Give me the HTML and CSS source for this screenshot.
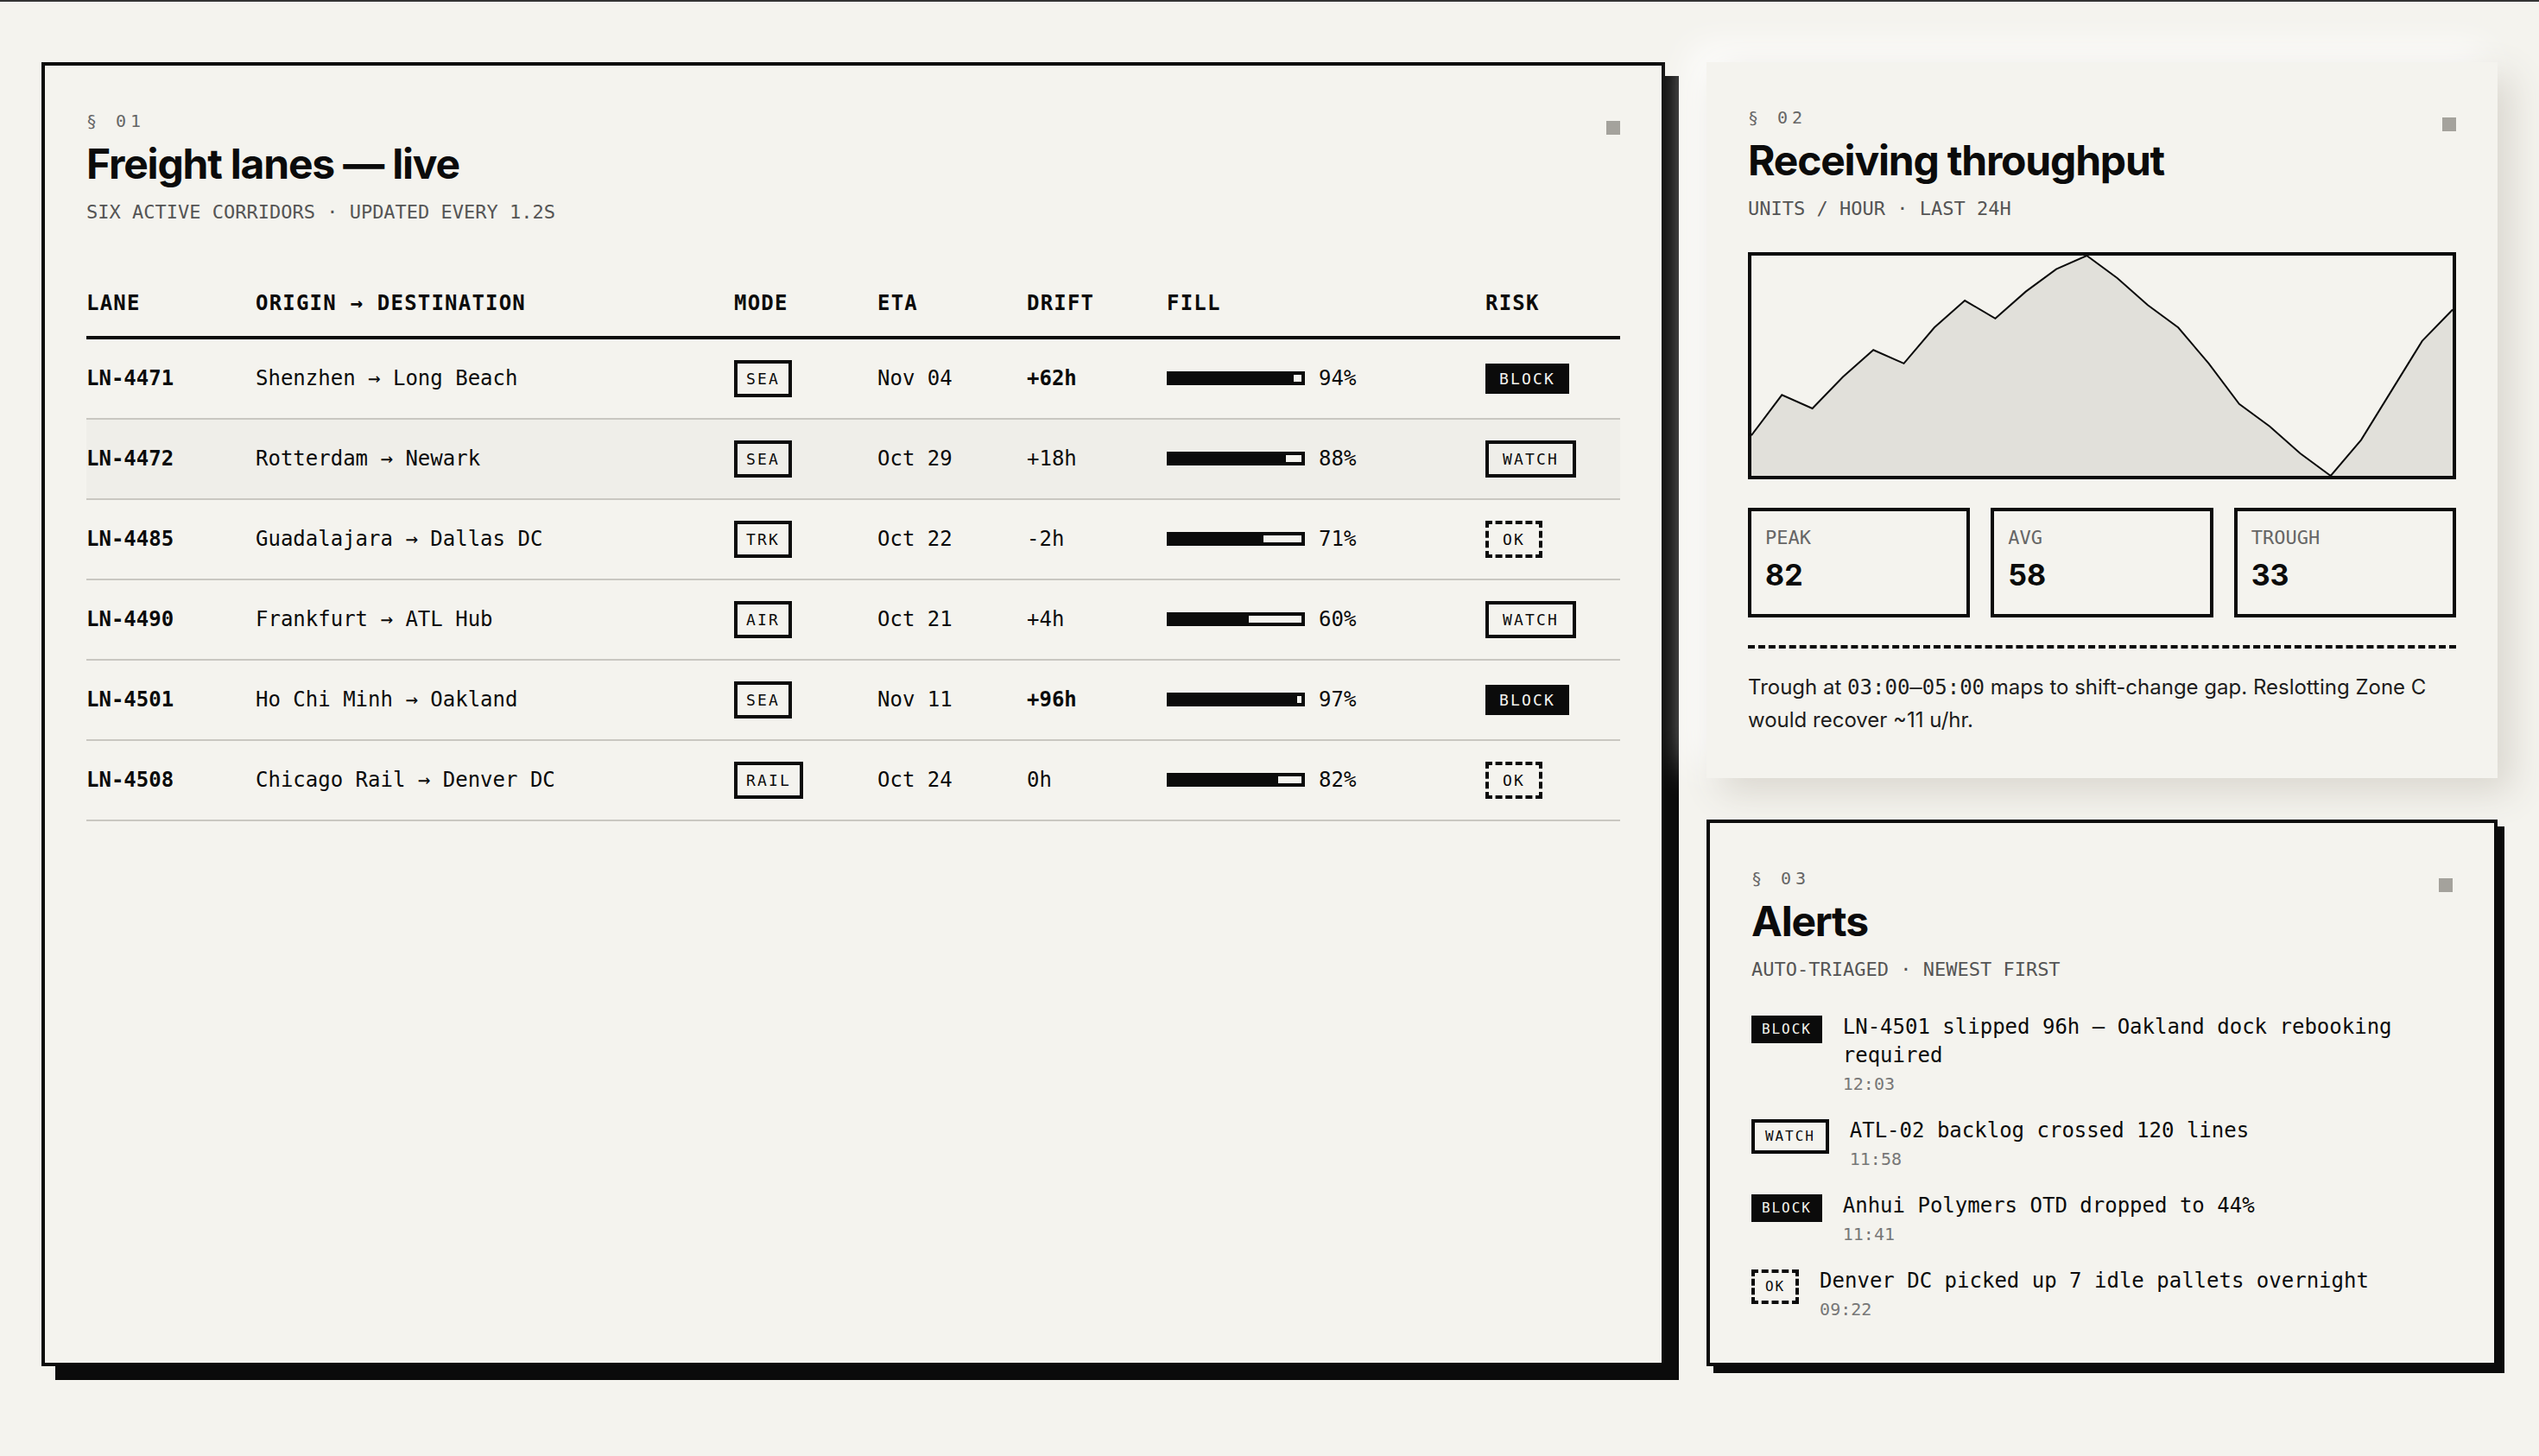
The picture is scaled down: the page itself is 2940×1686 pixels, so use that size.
FILE: index.html
```html
<!DOCTYPE html>
<html lang="en">
<head>
  <meta charset="UTF-8" />
  <meta name="viewport" content="width=device-width, initial-scale=1" />
  <title>Freight ops board</title>
  <link rel="stylesheet" href="styles.css">
</head>
<body>

  <main class="board">

    <!-- lanes table -->
    <section class="panel panel-hard">
      <header class="panel-head">
        <div>
          <div class="eyebrow">§ 01</div>
          <h2>Freight lanes — live</h2>
          <div class="sub">Six active corridors · updated every 1.2s</div>
        </div>
        <span class="pip"></span>
      </header>

      <table class="lanes">
        <colgroup>
          <col class="c-lane">
          <col class="c-route">
          <col class="c-mode">
          <col class="c-eta">
          <col class="c-drift">
          <col class="c-fill">
          <col>
        </colgroup>
        <thead>
          <tr>
            <th>Lane</th>
            <th>Origin → Destination</th>
            <th>Mode</th>
            <th>ETA</th>
            <th>Drift</th>
            <th>Fill</th>
            <th>Risk</th>
          </tr>
        </thead>
        <tbody>
          <tr>
            <td class="id">LN-4471</td>
            <td>Shenzhen → Long Beach</td>
            <td><span class="badge tag">SEA</span></td>
            <td>Nov 04</td>
            <td class="hot">+62h</td>
            <td><div class="fill"><span class="bar"><i style="width:94%"></i></span>94%</div></td>
            <td><span class="badge block">BLOCK</span></td>
          </tr>
          <tr class="is-active">
            <td class="id">LN-4472</td>
            <td>Rotterdam → Newark</td>
            <td><span class="badge tag">SEA</span></td>
            <td>Oct 29</td>
            <td>+18h</td>
            <td><div class="fill"><span class="bar"><i style="width:88%"></i></span>88%</div></td>
            <td><span class="badge">WATCH</span></td>
          </tr>
          <tr>
            <td class="id">LN-4485</td>
            <td>Guadalajara → Dallas DC</td>
            <td><span class="badge tag">TRK</span></td>
            <td>Oct 22</td>
            <td>-2h</td>
            <td><div class="fill"><span class="bar"><i style="width:71%"></i></span>71%</div></td>
            <td><span class="badge ok">OK</span></td>
          </tr>
          <tr>
            <td class="id">LN-4490</td>
            <td>Frankfurt → ATL Hub</td>
            <td><span class="badge tag">AIR</span></td>
            <td>Oct 21</td>
            <td>+4h</td>
            <td><div class="fill"><span class="bar"><i style="width:60%"></i></span>60%</div></td>
            <td><span class="badge">WATCH</span></td>
          </tr>
          <tr>
            <td class="id">LN-4501</td>
            <td>Ho Chi Minh → Oakland</td>
            <td><span class="badge tag">SEA</span></td>
            <td>Nov 11</td>
            <td class="hot">+96h</td>
            <td><div class="fill"><span class="bar"><i style="width:97%"></i></span>97%</div></td>
            <td><span class="badge block">BLOCK</span></td>
          </tr>
          <tr>
            <td class="id">LN-4508</td>
            <td>Chicago Rail → Denver DC</td>
            <td><span class="badge tag">RAIL</span></td>
            <td>Oct 24</td>
            <td>0h</td>
            <td><div class="fill"><span class="bar"><i style="width:82%"></i></span>82%</div></td>
            <td><span class="badge ok">OK</span></td>
          </tr>
        </tbody>
      </table>
    </section>

    <div class="side">

      <!-- throughput chart -->
      <section class="panel panel-lift">
        <header class="panel-head">
          <div>
            <div class="eyebrow">§ 02</div>
            <h2>Receiving throughput</h2>
            <div class="sub">Units / hour · last 24h</div>
          </div>
          <span class="pip"></span>
        </header>

        <div class="chart">
          <!-- 24 hourly samples, y = 82 - value -->
          <svg viewBox="0 0 23 49" preserveAspectRatio="none">
            <polygon class="area" points="0,40 1,31 2,34 3,27 4,21 5,24 6,16 7,10 8,14 9,8 10,3 11,0 12,5 13,11 14,16 15,24 16,33 17,38 18,44 19,49 20,41 21,30 22,19 23,12 23,49 0,49" />
            <polyline class="line" vector-effect="non-scaling-stroke" points="0,40 1,31 2,34 3,27 4,21 5,24 6,16 7,10 8,14 9,8 10,3 11,0 12,5 13,11 14,16 15,24 16,33 17,38 18,44 19,49 20,41 21,30 22,19 23,12" />
          </svg>
        </div>

        <div class="stats">
          <div class="stat">
            <div class="stat-label">Peak</div>
            <div class="stat-value">82</div>
          </div>
          <div class="stat">
            <div class="stat-label">Avg</div>
            <div class="stat-value">58</div>
          </div>
          <div class="stat">
            <div class="stat-label">Trough</div>
            <div class="stat-value">33</div>
          </div>
        </div>

        <p class="note">Trough at <code>03:00–05:00</code> maps to shift-change gap. Reslotting Zone C would recover ~11 u/hr.</p>
      </section>

      <!-- alerts feed -->
      <section class="panel panel-alerts">
        <header class="panel-head">
          <div>
            <div class="eyebrow">§ 03</div>
            <h2>Alerts</h2>
            <div class="sub">Auto-triaged · newest first</div>
          </div>
          <span class="pip"></span>
        </header>

        <ul class="alerts">
          <li>
            <span class="badge sm block">BLOCK</span>
            <div>
              <p class="alert-text">LN-4501 slipped 96h — Oakland dock rebooking required</p>
              <span class="alert-time">12:03</span>
            </div>
          </li>
          <li>
            <span class="badge sm">WATCH</span>
            <div>
              <p class="alert-text">ATL-02 backlog crossed 120 lines</p>
              <span class="alert-time">11:58</span>
            </div>
          </li>
          <li>
            <span class="badge sm block">BLOCK</span>
            <div>
              <p class="alert-text">Anhui Polymers OTD dropped to 44%</p>
              <span class="alert-time">11:41</span>
            </div>
          </li>
          <li>
            <span class="badge sm ok">OK</span>
            <div>
              <p class="alert-text">Denver DC picked up 7 idle pallets overnight</p>
              <span class="alert-time">09:22</span>
            </div>
          </li>
        </ul>
      </section>

    </div>
  </main>

</body>
</html>
```

FILE: styles.css
```css
body {
  margin: 0;
  background: #f4f3ee;
  color: #0b0b0b;
  font-family: Inter, "Liberation Sans", sans-serif;
  border-top: 2px solid #333;
}

.board {
  display: grid;
  grid-template-columns: minmax(0, 1fr) 916px;
  gap: 48px;
  padding: 70px 48px 48px;
}

.side {
  display: flex;
  flex-direction: column;
  gap: 48px;
}

/* panels */

.panel {
  background: #f4f3ee;
  padding: 48px;
}

.panel-hard {
  border: 4px solid #0b0b0b;
  box-shadow: 16px 16px 0 #0b0b0b;
}

.panel-lift {
  box-shadow: 16px 16px 40px #d9d6ce, -16px -16px 40px #ffffff;
}

.panel-alerts {
  border: 4px solid #0b0b0b;
  box-shadow: 8px 8px 0 #0b0b0b;
}

.panel-head {
  display: flex;
  justify-content: space-between;
  align-items: flex-start;
  margin-bottom: 34px;
}

.eyebrow {
  font-family: "DejaVu Sans Mono", monospace;
  font-size: 20px;
  line-height: 32px;
  letter-spacing: 0.25em;
  color: #666;
}

h2 {
  margin: 8px 0 0;
  font-size: 48px;
  line-height: 1.1;
  font-weight: 700;
  letter-spacing: -0.025em;
}

.sub {
  margin-top: 13px;
  font-family: "DejaVu Sans Mono", monospace;
  font-size: 22px;
  line-height: 32px;
  color: #555;
  text-transform: uppercase;
}

.pip {
  flex: none;
  width: 16px;
  height: 16px;
  margin-top: 16px;
  background: #a4a29c;
}

/* lanes table */

.lanes {
  width: 100%;
  table-layout: fixed;
  border-collapse: separate;
  border-spacing: 0;
  font-family: "DejaVu Sans Mono", monospace;
  font-size: 24px;
}

.c-lane { width: 196px; }
.c-route { width: 554px; }
.c-mode { width: 166px; }
.c-eta { width: 173px; }
.c-drift { width: 162px; }
.c-fill { width: 369px; }

.lanes th {
  padding: 41px 0 24px;
  line-height: 28px;
  text-align: left;
  font-weight: 700;
  letter-spacing: 0.05em;
  text-transform: uppercase;
  border-bottom: 4px solid #0b0b0b;
}

.lanes td {
  padding: 24px 0;
  line-height: 28px;
  border-bottom: 2px solid #c9c7c1;
  white-space: nowrap;
}

.lanes tr.is-active td {
  background: #efeee9;
}

.id,
.hot {
  font-weight: 700;
}

.fill {
  display: flex;
  align-items: center;
  gap: 16px;
}

.bar {
  flex: none;
  width: 160px;
  height: 16px;
  box-sizing: border-box;
  border: 4px solid #0b0b0b;
  background: #f4f3ee;
}

.bar i {
  display: block;
  height: 100%;
  background: #0b0b0b;
}

/* status badges */

.badge {
  display: inline-block;
  vertical-align: middle;
  padding: 8px 16px;
  border: 4px solid #0b0b0b;
  font-family: "DejaVu Sans Mono", monospace;
  font-size: 18px;
  line-height: 19px;
  letter-spacing: 0.12em;
  color: #0b0b0b;
}

.badge.tag {
  padding: 8px 10px;
}

.badge.block {
  border: 0;
  background: #0b0b0b;
  color: #f4f3ee;
}

.badge.ok {
  border-style: dashed;
}

.badge.sm {
  flex: none;
  margin-top: 3px;
  padding: 8px 12px;
  font-size: 16px;
  line-height: 16px;
}

/* chart */

.chart {
  height: 263px;
  box-sizing: border-box;
  border: 4px solid #0b0b0b;
}

.chart svg {
  display: block;
  width: 100%;
  height: 100%;
}

.area {
  fill: #e1e0da;
}

.line {
  fill: none;
  stroke: #0b0b0b;
  stroke-width: 2;
}

.stats {
  display: grid;
  grid-template-columns: repeat(3, 1fr);
  gap: 24px;
  margin-top: 33px;
}

.stat {
  border: 4px solid #0b0b0b;
  padding: 18px 16px 24px;
}

.stat-label {
  font-family: "DejaVu Sans Mono", monospace;
  font-size: 22px;
  line-height: 1.2;
  color: #666;
  text-transform: uppercase;
}

.stat-value {
  margin-top: 10px;
  font-size: 34px;
  line-height: 1.2;
  font-weight: 700;
}

.note {
  margin: 32px 0 0;
  padding-top: 26px;
  border-top: 4px dashed #0b0b0b;
  font-size: 24px;
  line-height: 38px;
  color: #1c1c1c;
}

.note code {
  font-family: "DejaVu Sans Mono", monospace;
  font-size: 1em;
}

/* alerts */

.alerts {
  list-style: none;
  margin: 0;
  padding: 0;
  display: flex;
  flex-direction: column;
  gap: 24px;
}

.alerts li {
  display: flex;
  align-items: flex-start;
  gap: 24px;
}

.alert-text {
  margin: 0;
  font-family: "DejaVu Sans Mono", monospace;
  font-size: 24px;
  line-height: 33px;
}

.alert-time {
  display: block;
  margin-top: 2px;
  font-family: "DejaVu Sans Mono", monospace;
  font-size: 20px;
  line-height: 28px;
  color: #777;
}
```
